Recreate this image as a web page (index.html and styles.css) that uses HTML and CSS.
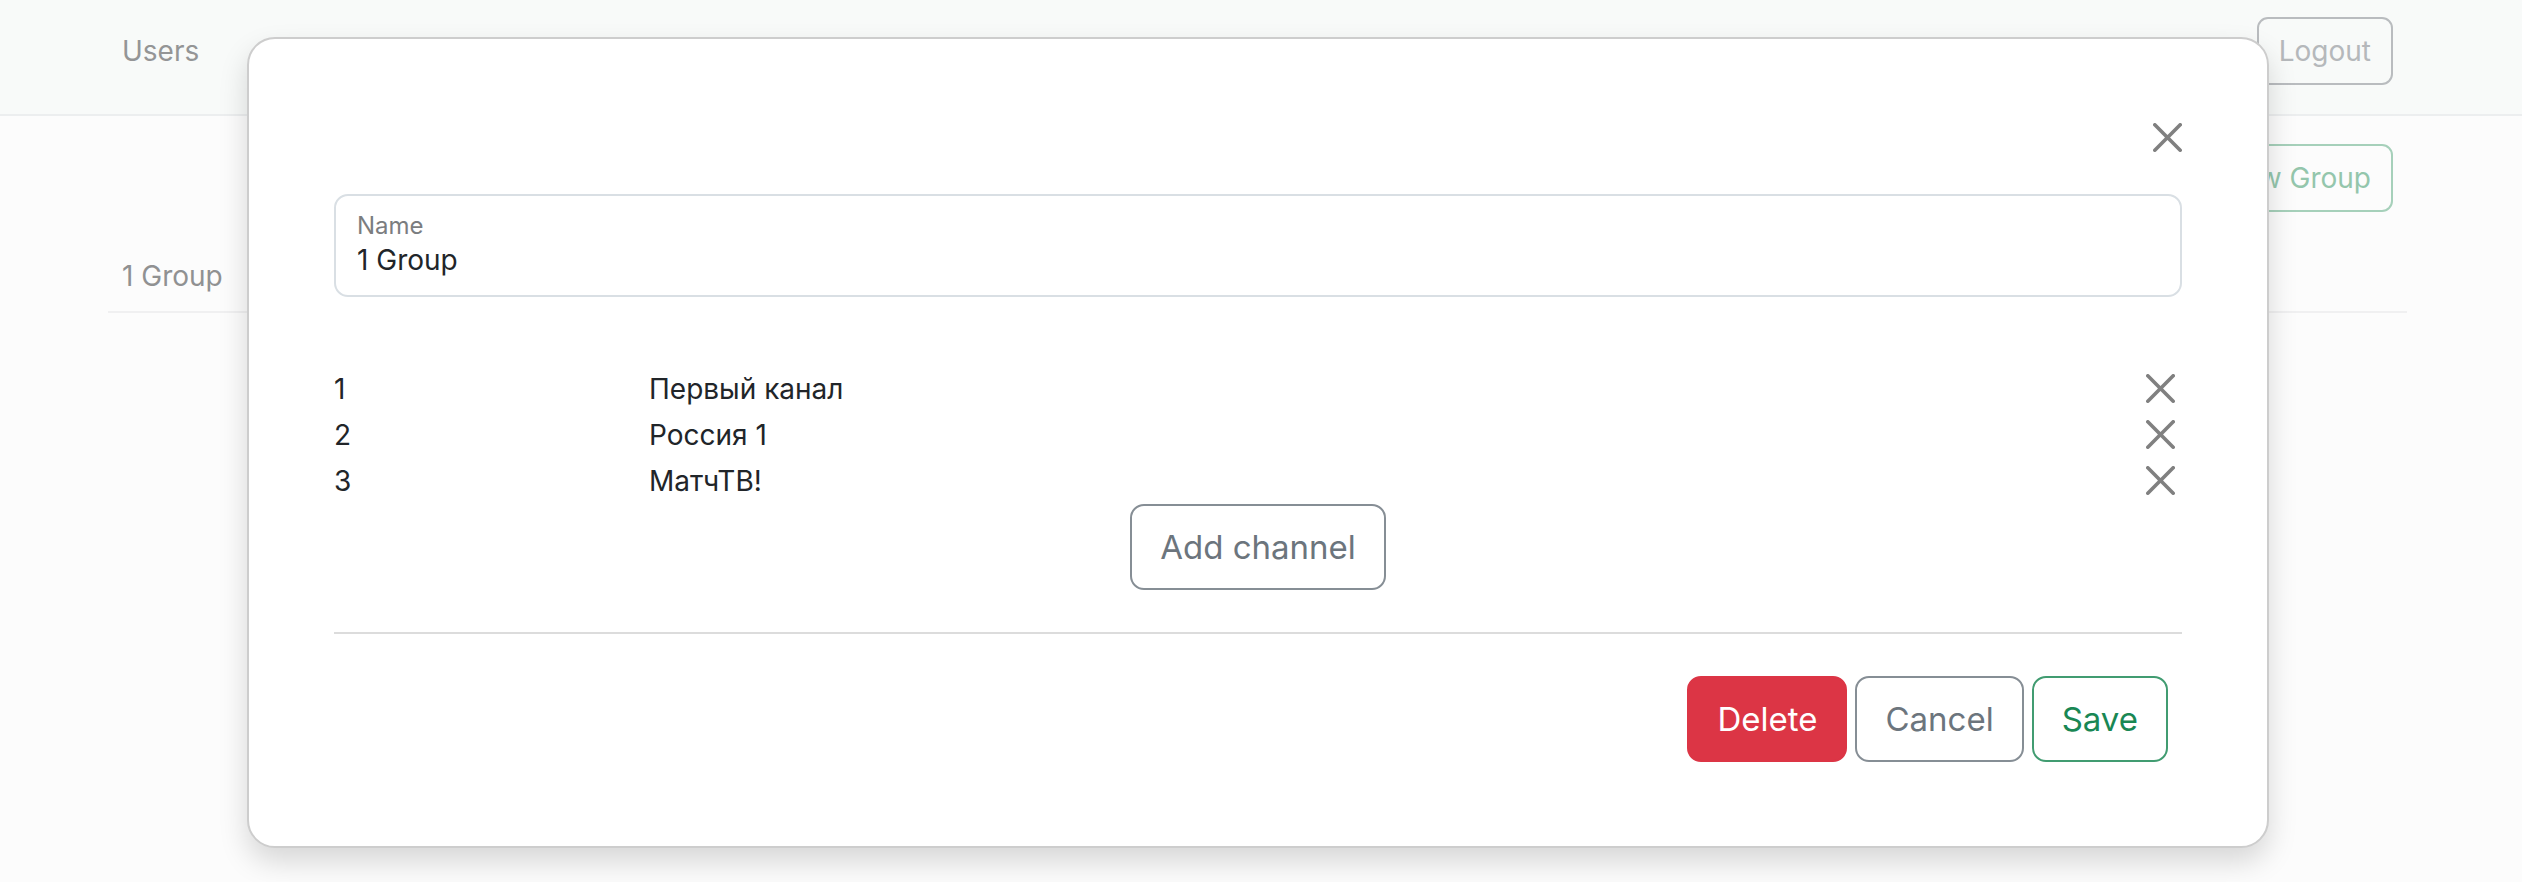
FILE: index.html
```html
<!DOCTYPE html>
<html lang="en">
<head>
<meta charset="utf-8">
<title>Groups</title>
<link rel="stylesheet" href="styles.css">
</head>
<body>
<svg class="sprite" aria-hidden="true">
  <symbol id="cross" viewBox="0 0 16 16">
    <path d="M.293.293a1 1 0 0 1 1.414 0L8 6.586 14.293.293a1 1 0 1 1 1.414 1.414L9.414 8l6.293 6.293a1 1 0 0 1-1.414 1.414L8 9.414l-6.293 6.293a1 1 0 0 1-1.414-1.414L6.586 8 .293 1.707a1 1 0 0 1 0-1.414z"/>
  </symbol>
</svg>
<div class="page">
  <header class="navbar">
    <a class="nav-link" href="#">Users</a>
    <button class="btn btn-secondary" type="button">Logout</button>
  </header>
  <main class="content">
    <div class="toolbar">
      <button class="btn btn-success" type="button">New Group</button>
    </div>
    <div class="group-row">1 Group</div>
  </main>
</div>
<dialog class="modal" open aria-label="Edit group">
  <div class="modal-top">
    <button class="close" type="button" aria-label="Close"><svg class="icon"><use href="#cross"/></svg></button>
  </div>
  <div class="field">
    <label class="field-label" for="name">Name</label>
    <input class="field-input" id="name" type="text" value="1 Group">
  </div>
  <ul class="channels">
    <li class="channel"><span>1</span><span>Первый канал</span><button class="close" type="button" aria-label="Remove"><svg class="icon"><use href="#cross"/></svg></button></li>
    <li class="channel"><span>2</span><span>Россия 1</span><button class="close" type="button" aria-label="Remove"><svg class="icon"><use href="#cross"/></svg></button></li>
    <li class="channel"><span>3</span><span>МатчТВ!</span><button class="close" type="button" aria-label="Remove"><svg class="icon"><use href="#cross"/></svg></button></li>
  </ul>
  <div class="add">
    <button class="btn btn-lg btn-secondary" type="button">Add channel</button>
  </div>
  <hr class="divider">
  <div class="actions">
    <button class="btn btn-lg btn-danger" type="button">Delete</button>
    <button class="btn btn-lg btn-secondary" type="button">Cancel</button>
    <button class="btn btn-lg btn-success" type="button">Save</button>
  </div>
</dialog>
</body>
</html>
```

FILE: styles.css
```css
* { box-sizing: border-box; }
body {
  margin: 0;
  min-height: 100vh;
  background: #fcfcfc;
  color: #212529;
  font: 28px/46px Inter, "Noto Sans", sans-serif;
}
.sprite { position: absolute; width: 0; height: 0; }
.navbar {
  display: flex;
  justify-content: space-between;
  align-items: flex-start;
  padding: 17px 129px 29px 122px;
  background: #f8faf9;
  border-bottom: 2px solid #eceeef;
}
.nav-link {
  padding: 11px 0;
  color: #949596;
  text-decoration: none;
}
.content { padding: 28px 115px 0 108px; }
.toolbar {
  display: flex;
  justify-content: flex-end;
  padding-right: 14px;
}
.group-row {
  margin-top: 41px;
  padding: 0 14px 12px;
  border-bottom: 2px solid #f0f0f1;
  color: #909192;
}
.btn {
  padding: 9px 20px;
  border: 2px solid;
  border-radius: 11px;
  background: transparent;
  font: inherit;
}
.page .btn-secondary { color: #b5b8bb; }
.page .btn-success { color: #94c6ac; }
.btn-lg {
  padding: 13px 28px;
  border-radius: 14px;
  font-size: 33px;
  line-height: 56px;
}
.btn-secondary { color: #6c757d; border-color: #868e95; }
.page .btn-secondary { border-color: #b9bcbf; }
.btn-success { color: #198754; border-color: #419c71; }
.page .btn-success { border-color: #a6d0ba; }
.btn-danger { color: #fff; background: #dc3545; border-color: #dc3545; }
.modal {
  position: absolute;
  inset: 37px 253px auto 247px;
  width: auto;
  max-width: none;
  margin: 0;
  padding: 84px 85px;
  border: 2px solid #cdcdcd;
  border-radius: 28px;
  background: #fff;
  color: #212529;
  box-shadow: 0 14px 29px rgba(0, 0, 0, 0.15);
}
.modal-top {
  display: flex;
  justify-content: flex-end;
  padding-bottom: 42px;
}
.close {
  display: flex;
  padding: 0;
  border: 0;
  background: none;
}
.icon { width: 29px; height: 29px; fill: #808080; }
.field {
  display: flex;
  flex-direction: column;
  padding: 13px 21px 18px;
  border: 2px solid #d9dfe4;
  border-radius: 14px;
}
.field-label {
  color: #7b7d80;
  font-size: 24px;
  line-height: 34px;
}
.field-input {
  width: 100%;
  height: 34px;
  padding: 0;
  border: 0;
  outline: 0;
  background: none;
  color: inherit;
  font: inherit;
  line-height: 34px;
}
.channels {
  margin: 69px 0 0;
  padding: 0;
  list-style: none;
}
.channel {
  display: grid;
  grid-template-columns: 315px 1fr auto;
  align-items: center;
  padding-right: 7px;
}
.channel .close { padding-bottom: 2px; }
.add { display: flex; justify-content: center; }
.divider {
  margin: 42px 0;
  border: 0;
  border-top: 2px solid #dcdcdc;
}
.actions {
  display: flex;
  justify-content: flex-end;
  gap: 8px;
  padding-right: 14px;
}
```
